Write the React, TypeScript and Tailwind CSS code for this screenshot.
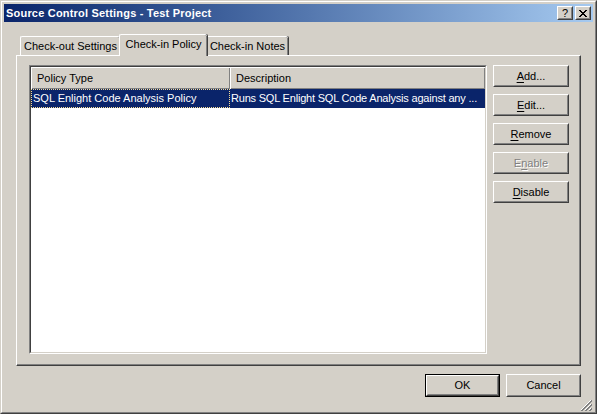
import React from 'react';

const font = { fontFamily: '"Liberation Sans", Arial, sans-serif' };

function Btn({ label, u = -1, disabled, def, w = 'w-[76px]', h = 'h-[22px]' }: { label: string; u?: number; disabled?: boolean; def?: boolean; w?: string; h?: string }) {
  const text =
    u < 0 ? (
      label
    ) : (
      <>
        {label.slice(0, u)}
        <span className="underline underline-offset-2">{label.slice(u, u + 1)}</span>
        {label.slice(u + 1)}
      </>
    );
  return (
    <div className={`${w} ${h} shrink-0 bg-[#D4D0C8] text-[11px] ${def ? 'border border-black' : ''}`}>
      <div className="flex h-full w-full border border-t-white border-l-white border-r-[#404040] border-b-[#404040]">
        <div className="flex h-full w-full items-center justify-center border border-t-[#D4D0C8] border-l-[#D4D0C8] border-r-[#808080] border-b-[#808080]">
          <span className={disabled ? 'text-[#808080] [text-shadow:1px_1px_0_#fff]' : 'text-black'}>{text}</span>
        </div>
      </div>
    </div>
  );
}

function Tab({ label, active, w }: { label: string; active?: boolean; w: string }) {
  return (
    <div
      className={`relative flex items-center justify-center border-l border-t border-white rounded-tl-[2px] rounded-tr-[2px] shadow-[inset_-1px_0_0_#808080,1px_0_0_#404040] bg-[#D4D0C8] ${w} ${
        active ? 'h-[22px] -mb-[1px] z-10 -mx-[1px]' : 'h-[19px]'
      }`}
    >
      <span className={active ? 'pb-[3px]' : 'pt-[1px]'}>{label}</span>
    </div>
  );
}

export default function App() {
  return (
    <div className="w-[597px] h-[414px] bg-[#D4D0C8] text-[11px] text-black" style={font}>
      <div className="h-full w-full border border-t-[#D4D0C8] border-l-[#D4D0C8] border-r-[#404040] border-b-[#404040]">
        <div className="flex h-full w-full flex-col border border-t-white border-l-white border-r-[#808080] border-b-[#808080] p-[2px]">
          {/* title bar */}
          <div className="flex h-[18px] shrink-0 items-center justify-between bg-gradient-to-r from-[#0A246A] to-[#A6CAF0] pl-[2px] pr-[2px]">
            <span className="font-bold text-white text-[11px] tracking-[0.2px]">Source Control Settings - Test Project</span>
            <div className="flex gap-[2px]">
              <Btn label="?" w="w-[16px]" h="h-[14px]" />
              <div className="w-[16px] h-[14px] bg-[#D4D0C8] border border-t-white border-l-white border-r-[#404040] border-b-[#404040]">
                <div className="flex h-full w-full items-center justify-center border border-t-[#D4D0C8] border-l-[#D4D0C8] border-r-[#808080] border-b-[#808080]">
                  <svg width="8" height="7" viewBox="0 0 8 7">
                    <path d="M0 0h2v1h-2zM6 0h2v1h-2zM1 1h2v1h-2zM5 1h2v1h-2zM2 2h4v1h-4zM3 3h2v1h-2zM2 4h4v1h-4zM1 5h2v1h-2zM5 5h2v1h-2zM0 6h2v1h-2zM6 6h2v1h-2z" fill="#000" />
                  </svg>
                </div>
              </div>
            </div>
          </div>

          {/* body */}
          <div className="flex flex-1 flex-col pl-[12px] pr-[12px]">
            <div className="mt-[12px] flex items-end pl-[4px]">
              <Tab label="Check-out Settings" w="w-[100px]" />
              <Tab label="Check-in Policy" w="w-[88px]" active />
              <Tab label="Check-in Notes" w="w-[82px]" />
            </div>
            <div className="flex h-[311px] border border-t-white border-l-white border-r-[#404040] border-b-[#404040] shadow-[inset_-1px_-1px_0_#808080] pl-[12px] pt-[9px] pr-[10px]">
              {/* list */}
              <div className="h-[289px] w-[458px] border border-t-[#808080] border-l-[#808080] border-r-white border-b-white">
                <div className="flex h-full w-full flex-col border border-t-[#404040] border-l-[#404040] border-r-[#D4D0C8] border-b-[#D4D0C8] bg-white">
                  <div className="flex h-[22px] shrink-0 bg-[#D4D0C8]">
                    <div className="flex w-[199px] items-center border-t border-l border-white pl-[5px] shadow-[inset_-1px_-1px_0_#808080]">
                      Policy Type
                    </div>
                    <div className="flex flex-1 items-center border-t border-l border-white pl-[5px] shadow-[inset_-1px_-1px_0_#808080]">
                      Description
                    </div>
                  </div>
                  <div className="flex h-[19px] bg-[#0A246A] text-white whitespace-nowrap">
                    <div className="flex w-[199px] items-center border border-dotted border-[#F5DB95] pl-[1px]">
                      SQL Enlight Code Analysis Policy
                    </div>
                    <div className="flex min-w-0 flex-1 items-center pl-[1px] tracking-[-0.2px]">Runs SQL Enlight SQL Code Analysis against any ...</div>
                  </div>
                </div>
              </div>
              {/* buttons */}
              <div className="ml-[6px] flex flex-col gap-[7px]">
                <Btn label="Add..." u={0} />
                <Btn label="Edit..." u={0} />
                <Btn label="Remove" u={0} />
                <Btn label="Enable" u={1} disabled />
                <Btn label="Disable" u={0} />
              </div>
            </div>
            <div className="mt-[8px] flex justify-end gap-[6px]">
              <Btn label="OK" def w="w-[75px]" h="h-[23px]" />
              <Btn label="Cancel" w="w-[75px]" h="h-[23px]" />
            </div>
            <div className="flex flex-1 items-end justify-end -mr-[11px] -mb-[1px]">
              <svg width="12" height="12" viewBox="0 0 12 12">
                <path d="M11 1L1 11M11 5L5 11M11 9L9 11" stroke="#fff" strokeWidth="1" />
                <path d="M12 1L1 12M12 2L2 12M12 5L5 12M12 6L6 12M12 9L9 12M12 10L10 12" stroke="#808080" strokeWidth="1" />
              </svg>
            </div>
          </div>
        </div>
      </div>
    </div>
  );
}
